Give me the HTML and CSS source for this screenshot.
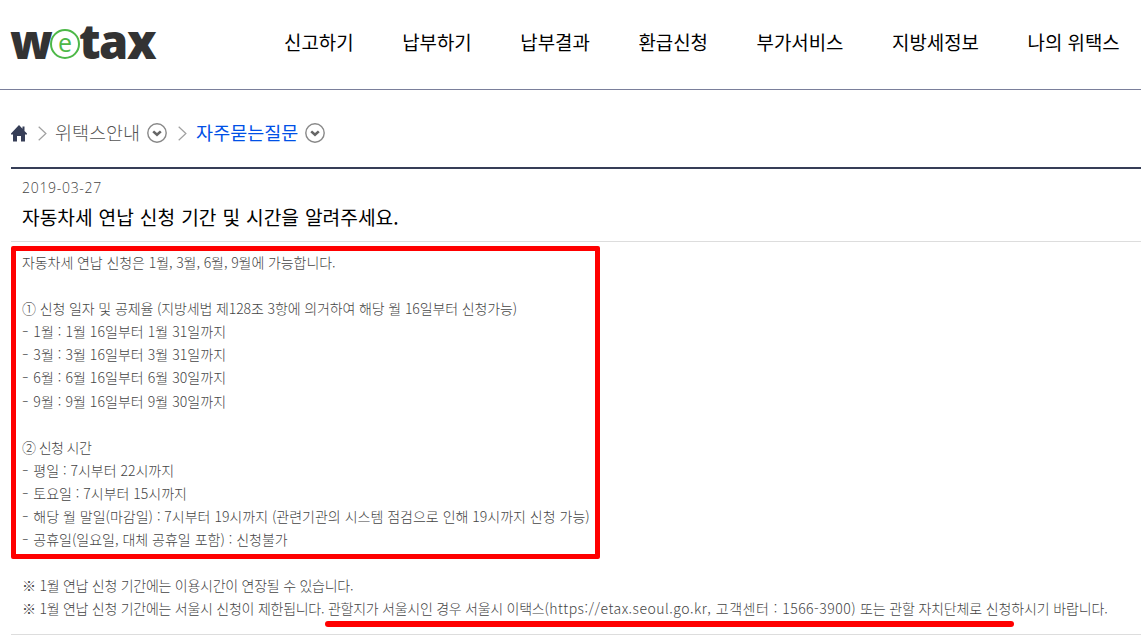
FILE: index.html
```html
<!DOCTYPE html>
<html lang="ko">
<head>
  <meta charset="UTF-8">
  <title>자주묻는질문 | wetax</title>
  <link rel="stylesheet" href="styles.css">
</head>
<body>
  <header class="header">
    <a class="logo" href="#">
      <span class="logo-w">w</span>
      <span class="logo-e">e</span>
      <span class="logo-tax">tax</span>
    </a>
    <nav class="gnb">
      <a href="#">신고하기</a>
      <a href="#">납부하기</a>
      <a href="#">납부결과</a>
      <a href="#">환급신청</a>
      <a href="#">부가서비스</a>
      <a href="#">지방세정보</a>
      <a href="#">나의 위택스</a>
    </nav>
  </header>

  <main class="content">
    <div class="location">
      <svg class="home" width="16" height="17" viewBox="0 0 16 17">
        <path d="M8 0L0 8.6V9.5H2V16.5H6V11H10V16.5H14V9.5H16V8.6L13.5 5.9V1.5H11.5V3.8Z" fill="#363e57"/>
      </svg>
      <svg class="arrow" width="9" height="15" viewBox="0 0 9 15">
        <path d="M.7.7L7.9 7.5L.7 14.3" fill="none" stroke="#a0a0a0" stroke-width="1.2"/>
      </svg>
      <span class="depth">위택스안내</span>
      <svg class="toggle" width="20" height="20" viewBox="0 0 20 20">
        <circle cx="10" cy="10" r="9.2" fill="none" stroke="#888" stroke-width="1.4"/>
        <path d="M6.2 8.4L10 11.8L13.8 8.4" fill="none" stroke="#666" stroke-width="2.6"/>
      </svg>
      <svg class="arrow second" width="9" height="15" viewBox="0 0 9 15">
        <path d="M.7.7L7.9 7.5L.7 14.3" fill="none" stroke="#a0a0a0" stroke-width="1.2"/>
      </svg>
      <span class="depth current">자주묻는질문</span>
      <svg class="toggle" width="20" height="20" viewBox="0 0 20 20">
        <circle cx="10" cy="10" r="9.2" fill="none" stroke="#888" stroke-width="1.4"/>
        <path d="M6.2 8.4L10 11.8L13.8 8.4" fill="none" stroke="#666" stroke-width="2.6"/>
      </svg>
    </div>

    <article class="view">
      <div class="view-head">
        <p class="date">2019-03-27</p>
        <h1>자동차세 연납 신청 기간 및 시간을 알려주세요.</h1>
      </div>
      <div class="view-body">
        <p class="intro">자동차세 연납 신청은 1월, 3월, 6월, 9월에 가능합니다.</p>
        <p class="gap rule">① 신청 일자 및 공제율 (지방세법 제128조 3항에 의거하여 해당 월 16일부터 신청가능)</p>
        <p class="month"><span class="dash">-</span> 1월 : 1월 16일부터 1월 31일까지</p>
        <p class="month"><span class="dash">-</span> 3월 : 3월 16일부터 3월 31일까지</p>
        <p class="month"><span class="dash">-</span> 6월 : 6월 16일부터 6월 30일까지</p>
        <p class="month"><span class="dash">-</span> 9월 : 9월 16일부터 9월 30일까지</p>
        <p class="gap time">② 신청 시간</p>
        <p><span class="dash">-</span> 평일 : 7시부터 22시까지</p>
        <p><span class="dash">-</span> 토요일 : 7시부터 15시까지</p>
        <p><span class="dash">-</span> 해당 월 말일(마감일) : 7시부터 19시까지 (관련기관의 시스템 점검으로 인해 19시까지 신청 가능)</p>
        <p><span class="dash">-</span> 공휴일(일요일, 대체 공휴일 포함) : 신청불가</p>
        <p class="gap note">※ 1월 연납 신청 기간에는 이용시간이 연장될 수 있습니다.</p>
        <p class="note">※ 1월 연납 신청 기간에는 서울시 신청이 제한됩니다. 관할지가 서울시인 경우 서울시 이택스<span class="contact">(https://etax.seoul.go.kr, 고객센터 : 1566-3900)</span><span class="tail"> 또는 관할 자치단체로 신청하시기 바랍니다.</span></p>
        <div class="mark-box"></div>
        <div class="mark-line"></div>
      </div>
    </article>
  </main>
</body>
</html>
```
FILE: styles.css
```css
* {
  box-sizing: border-box;
}

body {
  margin: 0;
  height: 637px;
  overflow: hidden;
  background: #fff;
  color: #000;
  font-family: "Noto Sans CJK KR", sans-serif;
}

a {
  color: inherit;
  text-decoration: none;
}

p, h1 {
  margin: 0;
  white-space: nowrap;
}

.header {
  display: flex;
  align-items: flex-start;
  height: 90px;
  padding-left: 10px;
  border-bottom: 1px solid #7a7f9b;
}

.logo {
  display: flex;
  align-items: flex-start;
  width: 274px;
  padding-top: 11px;
  color: #333;
  font-family: "Open Sans", sans-serif;
  font-size: 47px;
  font-weight: 800;
  line-height: 60px;
}

.logo-w {
  width: 40px;
}

.logo-e {
  width: 30px;
  height: 30px;
  margin-top: 18px;
  border: 2px solid #4db848;
  border-radius: 50%;
  color: #4db848;
  font-size: 25px;
  font-weight: 400;
  line-height: 22px;
  text-align: center;
}

.logo-tax {
  margin-left: -1px;
  letter-spacing: -1.5px;
}

.gnb {
  display: flex;
  gap: 48.6px;
  padding-top: 28px;
  font-size: 18.9px;
  line-height: 28px;
  white-space: nowrap;
}

.content {
  padding-left: 11px;
}

.location {
  display: flex;
  align-items: center;
  height: 77px;
  padding-top: 9px;
  color: #555;
  font-size: 18.5px;
  font-weight: 300;
}

.home {
  margin-right: 11px;
}

.arrow {
  margin-right: 8px;
}

.arrow.second {
  margin-left: 11px;
  margin-right: 9px;
}

.depth {
  margin-top: -2px;
  margin-right: 7px;
}

.current {
  color: #0050e6;
  font-weight: 400;
}

.view {
  border-top: 2px solid #363e57;
  border-bottom: 1px solid #ddd;
  height: 468px;
}

.view-head {
  height: 73px;
  padding: 7px 0 0 11px;
  border-bottom: 1px solid #ddd;
}

.date {
  color: #444;
  font-family: "Open Sans", sans-serif;
  font-size: 14px;
  font-weight: 300;
  letter-spacing: .7px;
  line-height: 23px;
}

.view-head h1 {
  margin-top: 4px;
  font-size: 19.2px;
  font-weight: 400;
  line-height: 28px;
  word-spacing: .6px;
}

.view-body {
  position: relative;
  padding: 9px 0 0 11px;
  color: #444;
  font-size: 14px;
  font-weight: 300;
  line-height: 23.1px;
}

.gap {
  margin-top: 23.1px;
}

.dash {
  display: inline-block;
  width: 7.4px;
  transform: scaleX(1.4);
  transform-origin: left;
}

.intro {
  letter-spacing: -.08px;
}

.rule {
  letter-spacing: -.12px;
}

.month {
  letter-spacing: .06px;
}

.time {
  letter-spacing: -.6px;
}

.note {
  letter-spacing: -.26px;
}

.contact {
  letter-spacing: .5px;
}

.tail {
  letter-spacing: -.15px;
}

/* red highlights over the text */
.mark-box {
  position: absolute;
  top: 4px;
  left: 0;
  width: 589px;
  height: 313px;
  border: 5px solid #f00;
  border-radius: 2px;
}

.mark-line {
  position: absolute;
  top: 379px;
  left: 314px;
  width: 689px;
  height: 6px;
  border-radius: 3px;
  background: #f00;
}
```
